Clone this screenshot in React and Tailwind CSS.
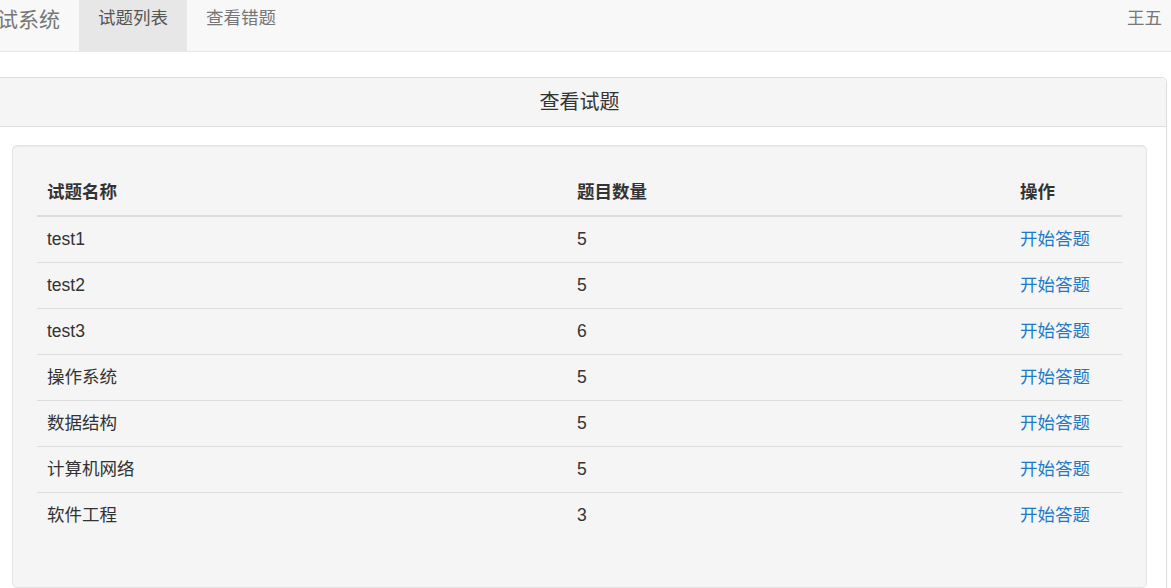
import React from "react";

const rows = [
  { name: "test1", count: 5 },
  { name: "test2", count: 5 },
  { name: "test3", count: 6 },
  { name: "操作系统", count: 5 },
  { name: "数据结构", count: 5 },
  { name: "计算机网络", count: 5 },
  { name: "软件工程", count: 3 },
];

const App = () => {
  return (
    <div
      className="w-[1171px] h-[588px] overflow-hidden bg-white text-[#333]"
      style={{ fontFamily: '"Liberation Sans", "Noto Sans CJK SC", sans-serif' }}
    >
      {/* Navbar */}
      <div className="h-[52px] bg-[#f8f8f8] border-b border-[#e7e7e7] flex items-start">
        <div className="-ml-[24px] pr-[19px] h-[51px] pt-[7px] text-[21px] leading-[26px] text-[#777] whitespace-nowrap">
          考试系统
        </div>
        <div className="h-[51px] px-[19px] bg-[#e7e7e7] pt-[6px] text-[17.5px] leading-[25px] text-[#555]">
          试题列表
        </div>
        <div className="h-[51px] px-[19px] pt-[6px] text-[17.5px] leading-[25px] text-[#777]">
          查看错题
        </div>
        <div className="ml-auto pr-[9px] h-[51px] pt-[6px] text-[17.5px] leading-[25px] text-[#777]">
          王五
        </div>
      </div>

      {/* Panel */}
      <div className="mt-[25px] -ml-[8px] w-[1175px] border border-[#ddd] rounded-[5px] bg-white">
        <div className="h-[49px] bg-[#f5f5f5] border-b border-[#ddd] rounded-t-[5px] flex items-center justify-center text-[20px] text-[#333]">
          查看试题
        </div>
        <div className="pt-[18px] px-[19px] pb-[19px]">
          <div className="bg-[#f5f5f5] border border-[#e3e3e3] rounded-[5px] shadow-[inset_0_1px_1px_rgba(0,0,0,0.05)] p-[24px] pb-[49px]">
            <table className="w-[1085px] border-collapse text-[17.5px] leading-[25px]">
              <thead>
                <tr className="border-b-2 border-[#ddd]">
                  <th className="w-[530px] text-left font-bold px-[10px] py-[10px]">试题名称</th>
                  <th className="w-[443px] text-left font-bold px-[10px] py-[10px]">题目数量</th>
                  <th className="text-left font-bold px-[10px] py-[10px]">操作</th>
                </tr>
              </thead>
              <tbody>
                {rows.map((r, i) => (
                  <tr key={r.name} className={i > 0 ? "border-t border-[#ddd]" : ""}>
                    <td className="px-[10px] py-[10px]">{r.name}</td>
                    <td className="px-[10px] py-[10px]">{r.count}</td>
                    <td className="px-[10px] py-[10px]">
                      <a href="#" className="text-[#1c7ac9]">开始答题</a>
                    </td>
                  </tr>
                ))}
              </tbody>
            </table>
          </div>
        </div>
      </div>
    </div>
  );
};

export default App;
